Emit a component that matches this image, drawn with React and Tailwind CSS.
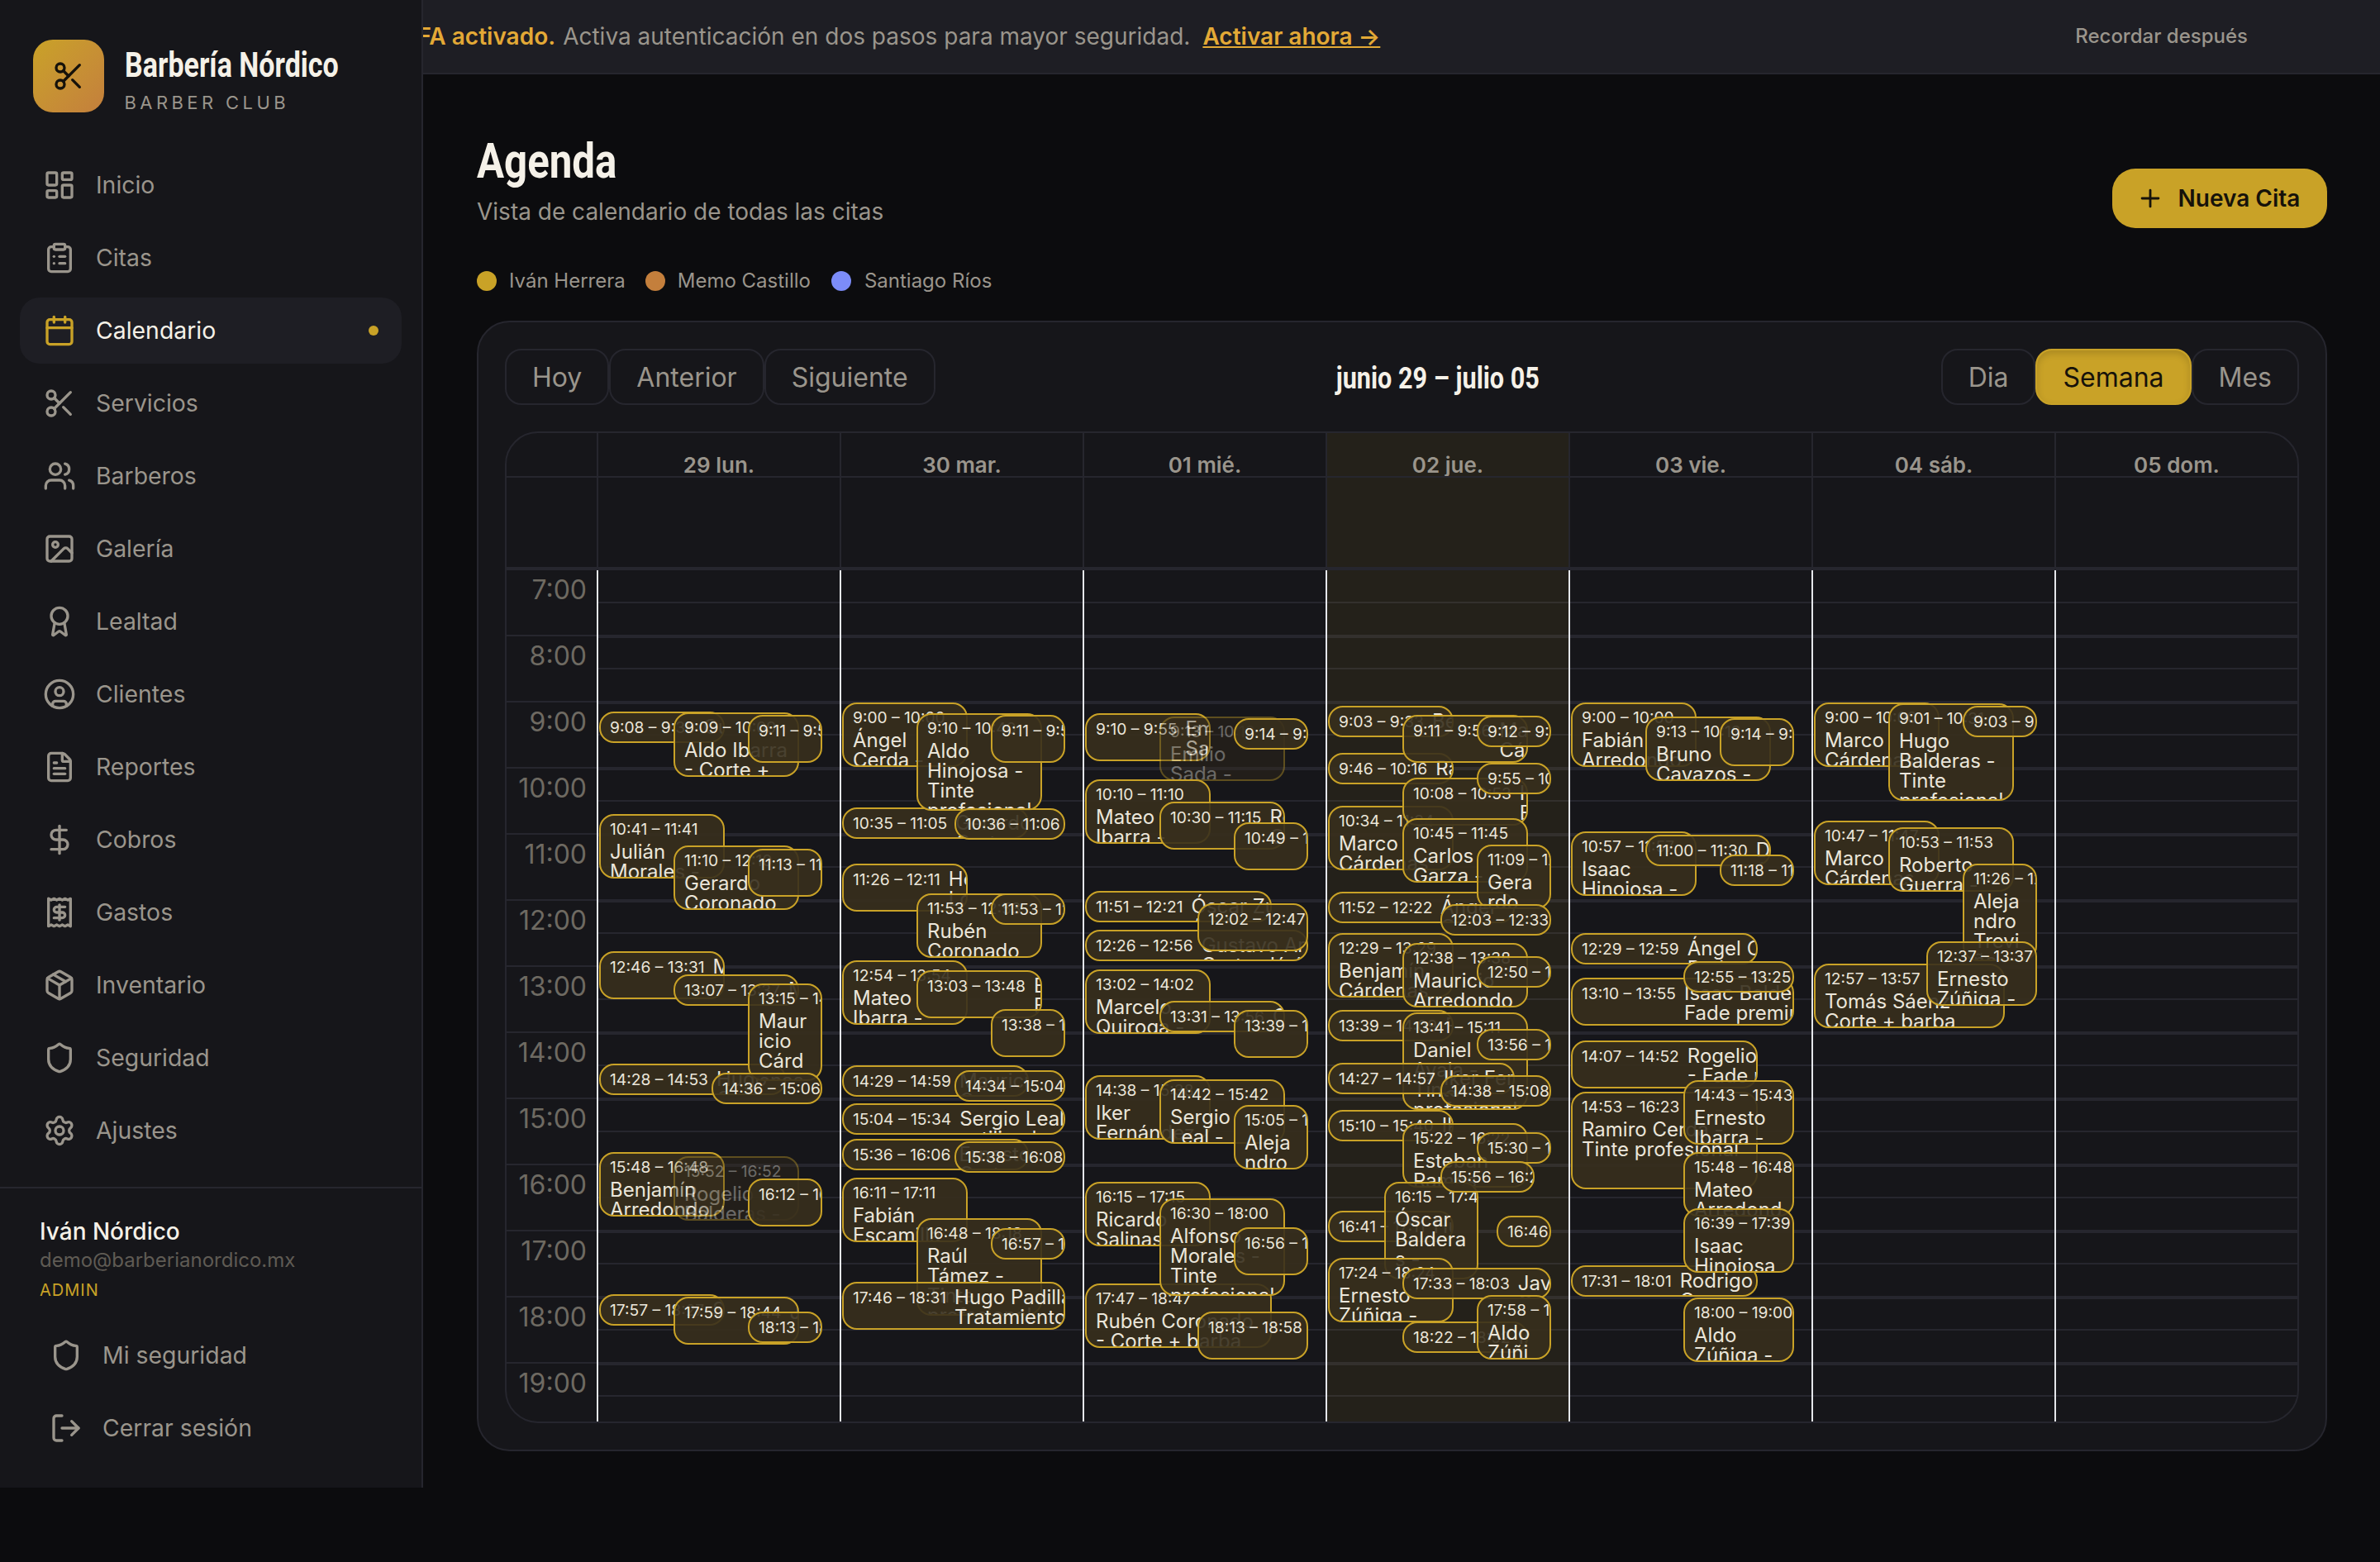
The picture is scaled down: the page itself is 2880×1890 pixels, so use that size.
import {
  LayoutDashboard, ClipboardList, Calendar, Scissors, Users, Image, Award, CircleUser,
  FileText, DollarSign, Receipt, Package, Shield, Settings, LogOut, Plus,
} from "lucide-react";

const NAV = [
  ["Inicio", LayoutDashboard],
  ["Citas", ClipboardList],
  ["Calendario", Calendar],
  ["Servicios", Scissors],
  ["Barberos", Users],
  ["Galería", Image],
  ["Lealtad", Award],
  ["Clientes", CircleUser],
  ["Reportes", FileText],
  ["Cobros", DollarSign],
  ["Gastos", Receipt],
  ["Inventario", Package],
  ["Seguridad", Shield],
  ["Ajustes", Settings],
];

const HOURS = [7, 8, 9, 10, 11, 12, 13, 14, 15, 16, 17, 18, 19];

// horizontal slots of an event inside its day column, px from the column's left edge
const A = [3, 155];
const B = [93, 245];
const C = [183, 273];
const D = [3, 229];
const E = [139, 273];
const F = [3, 273];

// [start, end, slot, title, faded] in paint order
const DAYS = [
  {
    label: "29 lun.",
    events: [
      ["9:08", "9:38", A, "Gustavo"],
      ["10:41", "11:41", A, "Julián\nMorales -"],
      ["12:46", "13:31", A, "Mauricio"],
      ["14:28", "14:53", D, "Hugo\nCerda"],
      ["15:48", "16:48", A, "Benjamín\nArredondo"],
      ["17:57", "18:27", A, "Sergio"],
      ["9:09", "10:09", B, "Aldo Ibarra\n- Corte +"],
      ["11:10", "12:10", B, "Gerardo\nCoronado"],
      ["13:07", "13:37", B, "Marco"],
      ["17:59", "18:44", B, "Javier"],
      ["15:52", "16:52", B, "Rogelio\nBalderas -", true],
      ["9:11", "9:56", C, "Iker"],
      ["11:13", "11:58", C, "Raúl"],
      ["13:15", "14:45", C, "Maur\nicio\nCárd\nenas"],
      ["16:12", "16:57", C, "Tomás"],
      ["18:13", "18:43", C, "Isaac"],
      ["14:36", "15:06", E, "Carlos"],
    ],
  },
  {
    label: "30 mar.",
    events: [
      ["9:00", "10:00", A, "Ángel\nCerda -"],
      ["10:35", "11:05", D, "Gerardo\nCorte"],
      ["11:26", "12:11", A, "Hector\nLozano"],
      ["12:54", "13:54", A, "Mateo\nIbarra -"],
      ["14:29", "14:59", D, "Mauricio\nGarza"],
      ["15:04", "15:34", F, "Sergio Leal\nestilizado"],
      ["15:36", "16:06", D, "Ernesto\nCorte"],
      ["16:11", "17:11", A, "Fabián\nEscamilla"],
      ["9:10", "10:40", B, "Aldo\nHinojosa -\nTinte\nprofesional"],
      ["11:53", "12:53", B, "Rubén\nCoronado"],
      ["13:03", "13:48", B, "Ernesto\nFade"],
      ["16:48", "18:18", B, "Raúl\nTámez -\nTinte\nprofesional"],
      ["17:46", "18:31", F, "Hugo Padilla\nTratamiento"],
      ["9:11", "9:56", C, "Daniel"],
      ["10:36", "11:06", E, "Gerardo\nCorte"],
      ["11:53", "12:23", C, "Iker"],
      ["13:38", "14:23", C, "Aldo"],
      ["14:34", "15:04", E, "Mauricio\nGarza"],
      ["15:38", "16:08", E, "Ernesto\nCorte"],
      ["16:57", "17:27", C, "Isaac"],
    ],
  },
  {
    label: "01 mié.",
    events: [
      ["9:10", "9:55", A, "Emilio\nSada"],
      ["10:10", "11:10", A, "Mateo\nIbarra -"],
      ["11:51", "12:21", D, "Óscar Zú\nAyala"],
      ["12:26", "12:56", F, "Gustavo Ar\nCorte clásico"],
      ["13:02", "14:02", A, "Marcelo\nQuiroga -"],
      ["14:38", "15:38", A, "Iker\nFernández"],
      ["16:15", "17:15", A, "Ricardo\nSalinas -"],
      ["17:47", "18:47", D, "Rubén Coronado\n- Corte + barba"],
      ["9:13", "10:13", B, "Emilio\nSada -", true],
      ["10:30", "11:15", B, "Rogelio\nCorte"],
      ["13:31", "13:56", B, "Óscar"],
      ["14:42", "15:42", B, "Sergio\nLeal -"],
      ["16:30", "18:00", B, "Alfonso\nMorales -\nTinte\nprofesional"],
      ["9:14", "9:44", C, "Hugo"],
      ["10:49", "11:34", C, "Marco"],
      ["12:02", "12:47", E, "Raúl"],
      ["13:39", "14:24", C, "Tomás"],
      ["15:05", "16:05", C, "Aleja\nndro"],
      ["16:56", "17:41", C, "Fabián"],
      ["18:13", "18:58", E, "Daniel"],
    ],
  },
  {
    label: "02 jue.",
    today: true,
    events: [
      ["9:03", "9:33", A, "Benjamín"],
      ["9:46", "10:16", A, "Ramiro"],
      ["10:34", "11:34", A, "Marco\nCárdenas"],
      ["11:52", "12:22", D, "Ángel\nGarza"],
      ["12:29", "13:29", A, "Benjamín\nCárdenas"],
      ["13:39", "14:09", A, "Rubén"],
      ["15:10", "15:40", A, "Iker"],
      ["16:41", "17:11", A, "Hugo"],
      ["9:11", "9:56", B, "Mateo\nCárdenas"],
      ["10:08", "10:53", B, "Hugo\nBalderas"],
      ["10:45", "11:45", B, "Carlos\nGarza -"],
      ["12:38", "13:38", B, "Mauricio\nArredondo"],
      ["13:41", "15:11", B, "Daniel\nAyala -\nTinte\nprofesional"],
      ["14:27", "14:57", D, "Iker Fernández\nCorte"],
      ["15:22", "16:22", B, "Esteban\nRamos"],
      ["16:15", "17:45", [71, 185], "Óscar\nBaldera\ns -"],
      ["17:24", "18:24", A, "Ernesto\nZúñiga -"],
      ["18:22", "18:52", B, "Isaac"],
      ["17:33", "18:03", [93, 273], "Javier\nCorte"],
      ["9:12", "9:42", C, "Aldo"],
      ["9:55", "10:25", C, "Raúl"],
      ["11:09", "12:09", C, "Gera\nrdo"],
      ["12:03", "12:33", E, "Marco"],
      ["12:50", "13:20", C, "Sergio"],
      ["13:56", "14:26", C, "Tomás"],
      ["14:38", "15:08", E, "Óscar"],
      ["15:30", "16:00", C, "Isaac"],
      ["15:56", "16:21", [139, 253], "Ángel"],
      ["16:46", "17:16", [207, 273], "Bruno"],
      ["17:58", "18:58", C, "Aldo\nZúñi\nga"],
    ],
  },
  {
    label: "03 vie.",
    events: [
      ["9:00", "10:00", A, "Fabián\nArredondo"],
      ["10:57", "11:57", A, "Isaac\nHinojosa -"],
      ["12:29", "12:59", D, "Ángel C\nBarba"],
      ["13:10", "13:55", F, "Isaac Balder\nFade premium"],
      ["14:07", "14:52", D, "Rogelio\n- Fade premium"],
      ["14:53", "16:23", D, "Ramiro Cerda -\nTinte profesional"],
      ["17:31", "18:01", D, "Rodrigo\nGarza"],
      ["9:13", "10:13", B, "Bruno\nCavazos -"],
      ["11:00", "11:30", B, "Daniel\nCorte"],
      ["9:14", "9:59", C, "Mateo"],
      ["11:18", "11:48", C, "Iker"],
      ["12:55", "13:25", E, "Hugo"],
      ["14:43", "15:43", E, "Ernesto\nIbarra -"],
      ["15:48", "16:48", E, "Mateo\nArredond"],
      ["16:39", "17:39", E, "Isaac\nHinojosa"],
      ["18:00", "19:00", E, "Aldo\nZúñiga -"],
    ],
  },
  {
    label: "04 sáb.",
    events: [
      ["9:00", "10:00", A, "Marco\nCárdenas"],
      ["10:47", "11:47", A, "Marco\nCárdenas"],
      ["12:57", "13:57", [3, 234], "Tomás Sáenz -\nCorte + barba"],
      ["9:01", "10:31", B, "Hugo\nBalderas -\nTinte\nprofesional"],
      ["10:53", "11:53", B, "Roberto\nGuerra -"],
      ["9:03", "9:33", C, "Raúl"],
      ["11:26", "12:56", C, "Aleja\nndro\nTrevi\nño"],
      ["12:37", "13:37", E, "Ernesto\nZúñiga -"],
    ],
  },
  { label: "05 dom.", events: [] },
];

const minutes = (t) => {
  const [h, m] = t.split(":").map(Number);
  return h * 60 + m;
};

function CalendarEvent({ start, end, slot, title, faded }) {
  const from = minutes(start);
  const mins = minutes(end) - from;
  const top = ((from - 420) * 4) / 3;
  const height = Math.max(38, (mins * 4) / 3 - 2);
  const short = mins <= 45;
  return (
    <div
      className={`absolute overflow-hidden rounded-[18px] border-2 border-[#c9a227] bg-[#372f1d]/90 px-[11px] text-[#ebe6da] ${short ? "flex gap-2.5 pt-[5px]" : "pt-1"} ${faded ? "opacity-40" : ""}`}
      style={{ top, height, left: slot[0] - 2, width: slot[1] - slot[0] }}
    >
      <div className="shrink-0 whitespace-nowrap text-[19.2px] leading-6">
        {start} – {end}
      </div>
      <div className={`whitespace-pre text-[24px] leading-6 ${short ? "" : "mt-1"}`}>{title}</div>
    </div>
  );
}

function Sidebar() {
  return (
    <aside className="flex h-[1800px] w-[512px] shrink-0 flex-col border-r-2 border-[#26262e] bg-[#16161a]">
      <div className="flex h-[184px] shrink-0 items-start gap-[25px] px-10 pt-12">
        <div className="flex h-[88px] w-[88px] items-center justify-center rounded-[24px] bg-gradient-to-br from-[#c9a227] to-[#c47f3c]">
          <Scissors size={40} className="text-[#16120a]" strokeWidth={2} />
        </div>
        <div>
          <div className="h-[58px] origin-left scale-x-[0.81] whitespace-nowrap font-bold text-[#f5f1e8] [font-family:Roboto,sans-serif] text-[42px] leading-[62px]">
            Barbería Nórdico
          </div>
          <div className="mt-[4px] text-[22px] leading-[28px] tracking-[0.2em] text-[#9a958c]">BARBER CLUB</div>
        </div>
      </div>
      <nav className="flex flex-col gap-2 px-6">
        {NAV.map(([label, Icon]) => {
          const active = label === "Calendario";
          return (
            <div
              key={label}
              className={`flex h-[80px] items-center gap-6 rounded-[24px] px-7 text-[28.4px] ${active ? "bg-[#1e1e24] text-[#f5f1e8]" : "text-[#9a958c]"}`}
            >
              <Icon size={40} strokeWidth={2} className={active ? "text-[#c9a227]" : ""} />
              <span className="flex-1">{label}</span>
              {active && <span className="h-3 w-3 rounded-full bg-[#c9a227]" />}
            </div>
          );
        })}
      </nav>
      <div className="mt-auto border-t-2 border-[#26262e] px-12 pb-8 pt-9">
        <div className="text-[28px] font-medium leading-8 text-[#f5f1e8]">Iván Nórdico</div>
        <div className="mt-[3px] text-[24px] leading-8 text-[#5f5b54]">demo@barberianordico.mx</div>
        <div className="mt-1 text-[20px] leading-8 tracking-[0.05em] text-[#c9a227]">ADMIN</div>
        <div className="mt-[23px] flex flex-col gap-2">
          {[["Mi seguridad", Shield], ["Cerrar sesión", LogOut]].map(([label, Icon]) => (
            <div key={label} className="flex h-[80px] items-center gap-6 px-3 text-[28.4px] text-[#9a958c]">
              <Icon size={40} strokeWidth={2} />
              <span>{label}</span>
            </div>
          ))}
        </div>
      </div>
    </aside>
  );
}

function ToolButton({ children, active }) {
  return (
    <button
      className={`h-[68px] rounded-[20px] border-2 px-[31px] pt-[2px] text-[32px] ${active ? "border-[#c9a227] bg-[#c9a227] text-[#16120a] shadow-[inset_0_4px_8px_rgba(0,0,0,0.15)]" : "border-[#26262e] text-[#9a958c]"}`}
    >
      {children}
    </button>
  );
}

function WeekGrid() {
  const rows = Array.from({ length: 26 }, (_, i) => i);
  return (
    <div className="overflow-hidden rounded-[40px] border-2 border-[#26262e]">
      <div className="grid h-[54px] grid-cols-[109px_repeat(7,294px)] border-b-2 border-[#26262e]">
        <div />
        {DAYS.map((d) => (
          <div
            key={d.label}
            className={`overflow-hidden border-l-2 border-[#26262e] pt-[19px] text-center text-[26px] font-semibold leading-[40px] text-[#9a958c] ${d.today ? "bg-[#c9a227]/[0.08]" : ""}`}
          >
            {d.label}
          </div>
        ))}
      </div>
      <div className="grid h-[112px] grid-cols-[109px_repeat(7,294px)] border-b-4 border-[#26262e]">
        <div />
        {DAYS.map((d) => (
          <div key={d.label} className={`border-l-2 border-[#26262e] ${d.today ? "bg-[#c9a227]/[0.08]" : ""}`} />
        ))}
      </div>
      <div className="grid h-[1030px] grid-cols-[109px_1fr] overflow-hidden">
        <div>
          {HOURS.map((h) => (
            <div key={h} className="h-[80px] border-b-2 border-[#26262e] pr-3 text-right text-[32px] leading-[48px] text-[#6e6a62]">
              {h}:00
            </div>
          ))}
        </div>
        <div className="relative">
          {rows.map((i) => (
            <div key={i} className={`h-[40px] border-b-2 border-[#26262e] ${i % 2 === 0 && i > 0 ? "border-t-2" : ""}`} />
          ))}
          <div className="absolute inset-0 grid grid-cols-7">
            {DAYS.map((d) => (
              <div key={d.label} className={`relative border-l-2 border-[#e5e7eb] ${d.today ? "bg-[#c9a227]/[0.08]" : ""}`}>
                {d.events.map(([start, end, slot, title, faded]) => (
                  <CalendarEvent key={start + end + title} start={start} end={end} slot={slot} title={title} faded={faded} />
                ))}
              </div>
            ))}
          </div>
        </div>
      </div>
    </div>
  );
}

export default function App() {
  return (
    <div className="flex min-h-[1890px] items-start bg-[#0c0c0e] text-[#f5f1e8] [font-family:Inter,sans-serif]">
      <Sidebar />
      <main className="min-w-0 flex-1">
        <div className="flex h-[90px] items-center justify-between overflow-hidden border-b-2 border-[#26262e] bg-[#1e1e24] pr-[160px]">
          <div className="-ml-[24px] flex shrink-0 items-center whitespace-nowrap text-[28px]">
            <span className="font-semibold text-[#e3a936]">2FA activado.</span>
            <span className="ml-[9px] text-[#9a958c]">Activa autenticación en dos pasos para mayor seguridad.</span>
            <span className="ml-[15px] font-semibold text-[#e3a936] underline">Activar ahora →</span>
          </div>
          <div className="text-[24px] font-medium text-[#9a958c]">Recordar después</div>
        </div>

        <div className="pl-[65px] pr-[64px]">
          <div className="flex h-[226px] items-start justify-between pt-[66px]">
            <div>
              <h1 className="h-[72px] origin-left scale-x-[0.82] font-bold text-[#f5f1e8] [font-family:Roboto,sans-serif] text-[60px] leading-[78px]">
                Agenda
              </h1>
              <p className="mt-[8px] text-[28px] leading-10 text-[#9a958c]">Vista de calendario de todas las citas</p>
            </div>
            <button className="mt-[48px] flex h-[72px] w-[260px] items-center justify-center gap-[17px] rounded-[28px] bg-[#c9a227] pr-[4px] text-[28px] font-semibold text-[#16120a]">
              <Plus size={34} strokeWidth={2} />
              Nueva Cita
            </button>
          </div>

          <div className="flex h-[48px] items-center text-[24px] text-[#9a958c]">
            <span className="h-6 w-6 rounded-full bg-[#c9a227]" />
            <span className="ml-[15px]">Iván Herrera</span>
            <span className="ml-6 h-6 w-6 rounded-full bg-[#c47f3c]" />
            <span className="ml-[15px]">Memo Castillo</span>
            <span className="ml-[25px] h-6 w-6 rounded-full bg-[#7c8cf8]" />
            <span className="ml-[16px]">Santiago Ríos</span>
          </div>

          <section className="mt-6 rounded-[40px] border-2 border-[#26262e] bg-[#16161a] px-8 pb-8 pt-8">
            <div className="mb-8 flex items-center justify-between">
              <div className="flex">
                <ToolButton>Hoy</ToolButton>
                <ToolButton>Anterior</ToolButton>
                <ToolButton>Siguiente</ToolButton>
              </div>
              <div className="h-[68px] origin-center scale-x-[0.85] whitespace-nowrap pt-[2px] font-bold text-[#f5f1e8] [font-family:Roboto,sans-serif] text-[36px] leading-[68px]">
                junio 29 – julio 05
              </div>
              <div className="flex">
                <ToolButton>Dia</ToolButton>
                <ToolButton active>Semana</ToolButton>
                <ToolButton>Mes</ToolButton>
              </div>
            </div>
            <WeekGrid />
          </section>
        </div>
      </main>
    </div>
  );
}
